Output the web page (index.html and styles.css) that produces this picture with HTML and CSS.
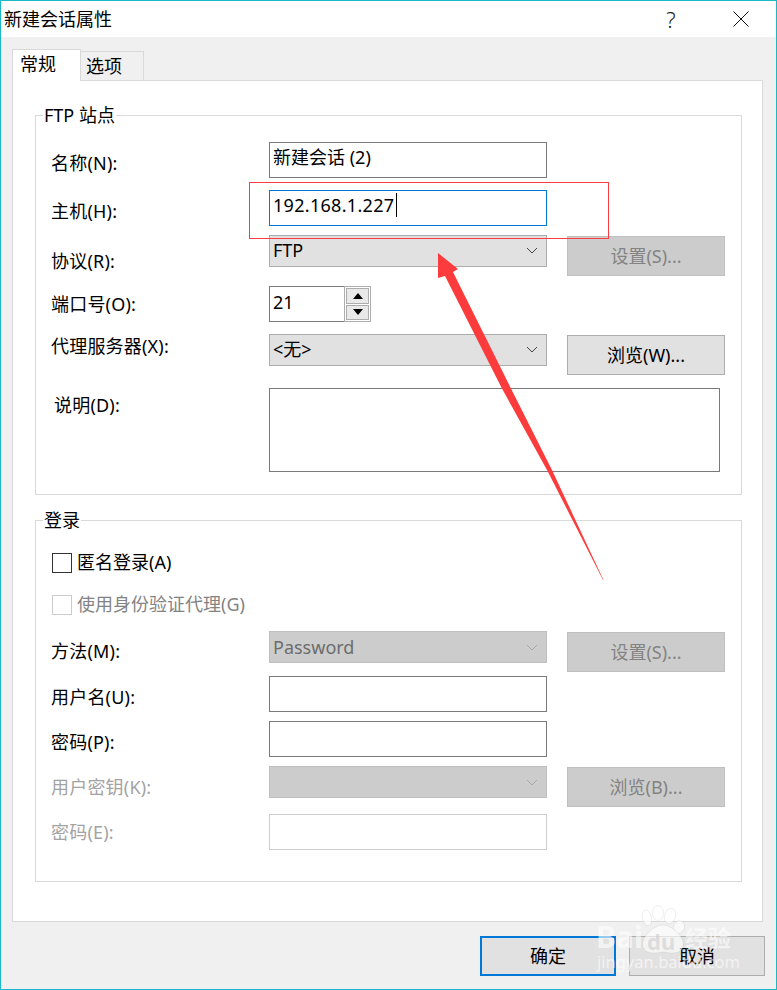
FILE: index.html
```html
<!DOCTYPE html>
<html lang="zh-CN">
<head>
<meta charset="utf-8">
<title>新建会话属性</title>
<link rel="stylesheet" href="styles.css">
</head>
<body>
<div class="window">
  <header class="titlebar">
    <span class="title">新建会话属性</span>
    <span class="help">?</span>
    <svg class="close" width="16" height="16" viewBox="0 0 16 16"><path d="M0.5 0.5L15.5 15.5M15.5 0.5L0.5 15.5" stroke="#111" stroke-width="1" fill="none"/></svg>
  </header>
  <div class="content">
    <div class="tabs">
      <div class="tab active">常规</div>
      <div class="tab">选项</div>
    </div>
    <div class="panel">
      <section class="group site">
        <span class="legend">FTP 站点</span>
        <div class="row r-name">
          <label class="lbl m9">名称(N):</label>
          <div class="input">新建会话 (2)</div>
        </div>
        <div class="row r-host">
          <label class="lbl m9">主机(H):</label>
          <div class="input focus"><span class="ip">192.168.1.227</span><span class="caret"></span></div>
        </div>
        <div class="row r-proto">
          <label class="lbl m14">协议(R):</label>
          <div class="select">FTP<svg class="chev" width="12" height="7" viewBox="0 0 12 7"><path d="M1 1L6 6L11 1" stroke="#444" fill="none"/></svg></div>
          <div class="btn side disabled">设置(S)...</div>
        </div>
        <div class="row r-port">
          <label class="lbl m6">端口号(O):</label>
          <div class="spin">
            <div class="spin-value">21</div>
            <div class="spin-btns">
              <div class="spin-btn"><svg width="10" height="6" viewBox="0 0 10 6"><path d="M5 0L10 6H0Z" fill="#000"/></svg></div>
              <div class="spin-btn"><svg width="10" height="6" viewBox="0 0 10 6"><path d="M0 0H10L5 6Z" fill="#000"/></svg></div>
            </div>
          </div>
        </div>
        <div class="row r-proxy">
          <label class="lbl m0">代理服务器(X):</label>
          <div class="select">&lt;无&gt;<svg class="chev" width="12" height="7" viewBox="0 0 12 7"><path d="M1 1L6 6L11 1" stroke="#444" fill="none"/></svg></div>
          <div class="btn side">浏览(W)...</div>
        </div>
        <div class="row r-desc">
          <label class="lbl m5 indent">说明(D):</label>
          <div class="textarea"></div>
        </div>
      </section>
      <section class="group login">
        <span class="legend">登录</span>
        <div class="check">
          <span class="box"></span><span class="check-text">匿名登录(A)</span>
        </div>
        <div class="check off">
          <span class="box"></span><span class="check-text">使用身份验证代理(G)</span>
        </div>
        <div class="row r-method">
          <label class="lbl m8">方法(M):</label>
          <div class="select disabled">Password<svg class="chev" width="12" height="7" viewBox="0 0 12 7"><path d="M1 1L6 6L11 1" stroke="#a8a8a8" fill="none"/></svg></div>
          <div class="btn side disabled">设置(S)...</div>
        </div>
        <div class="row r-user">
          <label class="lbl m9">用户名(U):</label>
          <div class="input"></div>
        </div>
        <div class="row r-pass">
          <label class="lbl m9">密码(P):</label>
          <div class="input"></div>
        </div>
        <div class="row r-key">
          <label class="lbl m9 dim">用户密钥(K):</label>
          <div class="select disabled"><svg class="chev" width="12" height="7" viewBox="0 0 12 7"><path d="M1 1L6 6L11 1" stroke="#a8a8a8" fill="none"/></svg></div>
          <div class="btn side disabled">浏览(B)...</div>
        </div>
        <div class="row r-phrase">
          <label class="lbl m6 dim">密码(E):</label>
          <div class="input off"></div>
        </div>
      </section>
    </div>
    <footer class="actions">
      <div class="btn action primary">确定</div>
      <div class="btn action">取消</div>
    </footer>
  </div>
  <svg class="overlay" width="777" height="990" viewBox="0 0 777 990">
    <rect x="249.5" y="182.5" width="359" height="56" fill="none" stroke="#fc3c40" stroke-width="1"/>
    <path d="M438 253L458 269L453 272L510.7 388L552 470L603.5 580L603 580L547 470L501.7 388L445 276L438 278Z" fill="#fc3c3c"/>
    <g class="mark">
      <ellipse cx="647" cy="918" rx="4.5" ry="8" transform="rotate(-12 647 918)"/>
      <ellipse cx="658" cy="913" rx="5.5" ry="7.5"/>
      <ellipse cx="670" cy="916" rx="5.5" ry="8" transform="rotate(15 670 916)"/>
      <ellipse cx="679" cy="927" rx="5.5" ry="6.5" transform="rotate(20 679 927)"/>
      <path d="M663 925C672 925 686 938 683 947C680 955 670 953 663 952C656 953 646 955 643 947C640 938 654 925 663 925Z"/>
      <text class="mark-bai" x="596" y="948">Bai</text>
      <text class="mark-du" x="647" y="950">du</text>
      <text class="mark-cn" x="685" y="947">经验</text>
      <text class="mark-url" x="597" y="968">jingyan.baidu.com</text>
    </g>
  </svg>
</div>
</body>
</html>
```
FILE: styles.css
```css
* { box-sizing: border-box; }
html, body { margin: 0; padding: 0; }
body {
  font-family: "Noto Sans", "Noto Sans CJK SC", sans-serif;
  font-size: 18px;
  line-height: 24px;
  color: #000;
}
.window {
  position: relative;
  width: 777px;
  height: 990px;
  overflow: hidden;
  background: #f0f0f0;
  border: 1px solid #19b9c6;
}
.titlebar {
  display: flex;
  align-items: center;
  height: 36px;
  padding-left: 3px;
  background: #fff;
}
.title { flex: 1; }
.help {
  width: 20px;
  margin-right: 52px;
  font-size: 22px;
  font-weight: 300;
  color: #222;
  text-align: center;
}
.close { margin-right: 27px; }
.content { padding: 12px 13px 0 11px; }
.tabs { display: flex; align-items: flex-end; height: 32px; }
.tab {
  width: 63px;
  height: 29px;
  margin-bottom: 1px;
  padding: 2px 0 0 5px;
  background: #f0f0f0;
  border: 1px solid #d9d9d9;
  border-bottom: 0;
  border-left: 0;
}
.tab.active {
  position: relative;
  z-index: 1;
  width: 69px;
  height: 32px;
  margin-bottom: 0;
  padding: 2px 0 0 7px;
  background: #fff;
  border-left: 1px solid #d9d9d9;
}
.panel {
  margin-top: -1px;
  width: 751px;
  padding: 34px 21px 39px 22px;
  background: #fff;
  border: 1px solid #d9d9d9;
}
.group {
  position: relative;
  width: 707px;
  padding-left: 16px;
  border: 1px solid #d9d9d9;
}
.site { padding-top: 26px; padding-bottom: 22px; }
.login { margin-top: 25px; padding-top: 30px; padding-bottom: 31px; }
.legend {
  position: absolute;
  top: -13px;
  left: 7px;
  padding: 0 1px;
  background: #fff;
}
.row {
  display: grid;
  grid-template-columns: 217px 278px 178px;
  align-items: start;
}
.row > .side { margin-left: 20px; width: 158px; }
.r-host { margin-top: 12px; }
.r-proto { margin-top: 9px; }
.r-port { margin-top: 10px; }
.r-proxy { margin-top: 12px; }
.r-desc { margin-top: 13px; }
.r-method { margin-top: 14px; }
.r-user { margin-top: 4px; }
.r-pass { margin-top: 9px; }
.r-key { margin-top: 9px; }
.r-phrase { margin-top: 7px; }
.lbl { display: block; margin-left: -1px; letter-spacing: 0.2px; white-space: nowrap; }
.m0 { margin-top: 0; }
.m5 { margin-top: 5px; }
.m6 { margin-top: 6px; }
.m8 { margin-top: 8px; }
.m9 { margin-top: 9px; }
.m14 { margin-top: 14px; }
.indent { padding-left: 3px; }
.dim { color: #a3a3a3; }
.input {
  height: 36px;
  padding: 2px 0 0 3px;
  background: #fff;
  border: 1px solid #7a7a7a;
  white-space: nowrap;
}
.input.focus { border-color: #0078d7; }
.input.off { border-color: #cccccc; }
.ip { letter-spacing: 0.3px; }
.caret {
  display: inline-block;
  width: 1px;
  height: 24px;
  margin-left: 2px;
  background: #000;
  vertical-align: top;
}
.textarea {
  grid-column: 2 / 4;
  width: 451px;
  height: 84px;
  background: #fff;
  border: 1px solid #7a7a7a;
}
.select {
  display: flex;
  align-items: center;
  justify-content: space-between;
  height: 32px;
  padding: 0 8px 2px 3px;
  background: #e1e1e1;
  border: 1px solid #adadad;
}
.chev { flex: none; margin-left: auto; }
.select.disabled {
  padding-bottom: 0;
  background: #cccccc;
  border-color: #bfbfbf;
  color: #6d6d6d;
}
.btn {
  display: flex;
  align-items: center;
  justify-content: center;
  background: #e1e1e1;
  border: 1px solid #adadad;
}
.side { height: 40px; margin-top: 1px; }
.btn.disabled {
  background: #cccccc;
  border-color: #bfbfbf;
  color: #838383;
}
.spin { display: flex; width: 102px; height: 36px; }
.spin-value {
  width: 75px;
  padding: 3px 0 0 3px;
  border: 1px solid #7a7a7a;
  border-right: 0;
}
.spin-btns {
  display: flex;
  flex-direction: column;
  gap: 1px;
  width: 27px;
  padding: 1px;
  border: 1px solid #adadad;
}
.spin-btn {
  display: flex;
  flex: 1;
  align-items: center;
  justify-content: center;
  background: #e9e9e9;
  border: 1px solid #adadad;
}
.check { display: flex; align-items: center; gap: 5px; height: 24px; }
.check-text { margin-top: -2px; }
.check.off { margin-top: 18px; color: #838383; }
.box {
  width: 20px;
  height: 20px;
  background: #fff;
  border: 1px solid #333;
}
.check.off .box { border-color: #cccccc; }
.actions {
  display: flex;
  justify-content: flex-end;
  gap: 13px;
  margin-top: 14px;
  margin-right: -2px;
}
.action { width: 136px; height: 40px; }
.primary { border: 2px solid #0078d7; }
.overlay { position: absolute; top: -1px; left: -1px; pointer-events: none; }
.mark { fill: rgba(255, 255, 255, 0.62); stroke: rgba(120, 120, 120, 0.12); stroke-width: 1; }
.mark text { font-family: "Noto Sans", "Noto Sans CJK SC", sans-serif; stroke: none; }
.mark-bai { font-size: 30px; font-weight: 700; }
.mark-du { font-size: 22px; font-weight: 700; fill: rgba(190, 190, 190, 0.45); }
.mark-cn { font-size: 23px; font-weight: 700; }
.mark-url { font-size: 16.5px; }
```
